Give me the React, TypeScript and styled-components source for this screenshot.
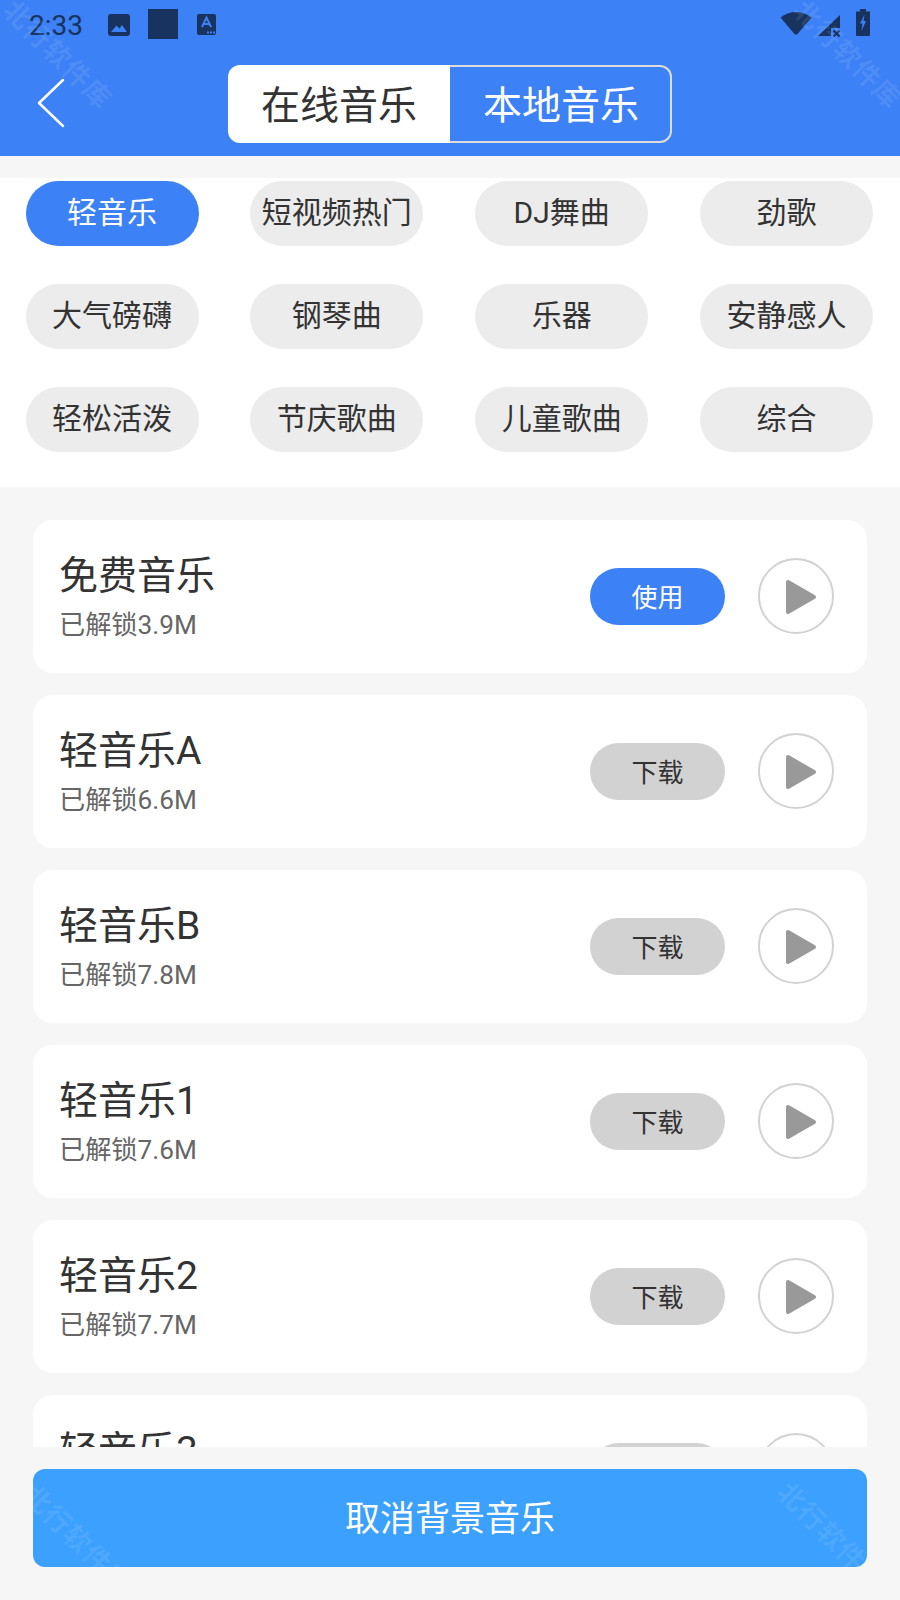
import { FunctionComponent } from "react";
import styled, { createGlobalStyle } from "styled-components";

const GlobalStyle = createGlobalStyle`
  html, body {
    margin: 0;
    padding: 0;
    background: #f6f6f6;
  }
  * {
    box-sizing: border-box;
  }
`;

const Page = styled.div`
  position: relative;
  width: 900px;
  height: 1600px;
  display: flex;
  flex-direction: column;
  overflow: hidden;
  background: #f6f6f6;
  font-family: Roboto, "Noto Sans CJK SC", sans-serif;
  color: #333;
`;
const Header = styled.header`
  height: 156px;
  flex: none;
  background: #3c81f6;
`;
const StatusBar = styled.div`
  height: 48px;
  padding: 9px 30px 0 29px;
  display: flex;
  align-items: flex-start;
  color: #18335f;
`;
const Time = styled.span`
  width: 78px;
  font-size: 28px;
  line-height: 32px;
  margin-top: 1px;
`;
const StatusLeft = styled.div`
  display: flex;
  align-items: flex-start;
`;
const StatusRight = styled.div`
  margin-left: auto;
  display: flex;
  align-items: flex-start;
`;
const NavRow = styled.div`
  position: relative;
  height: 108px;
  padding-top: 17px;
  display: flex;
  justify-content: center;
  align-items: flex-start;
`;
const BackButton = styled.button`
  position: absolute;
  left: 36px;
  top: 29px;
  width: 32px;
  height: 52px;
  padding: 0;
  border: 0;
  background: none;
`;
const Toggle = styled.div`
  display: flex;
  width: 444px;
  height: 78px;
`;
const ToggleTab = styled.div<{ $active?: boolean }>`
  flex: none;
  width: 222px;
  display: flex;
  align-items: center;
  justify-content: center;
  padding: 0 0 5px ${(p) => (p.$active ? 0 : 2)}px;
  font-size: 39px;
  background: ${(p) => (p.$active ? "#fff" : "transparent")};
  color: ${(p) => (p.$active ? "#333" : "#fff")};
  border: ${(p) => (p.$active ? "none" : "2px solid #dcdcdc")};
  border-left: none;
  border-radius: ${(p) => (p.$active ? "12px 0 0 12px" : "0 12px 12px 0")};
`;
const ChipPanel = styled.section`
  flex: none;
  margin-top: 22px;
  height: 309px;
  padding: 3px 27px 0 25.5px;
  background: #fff;
  display: grid;
  grid-template-columns: repeat(4, 173px);
  grid-auto-rows: 65px;
  justify-content: space-between;
  row-gap: 38px;
`;
const Chip = styled.div<{ $active?: boolean }>`
  display: flex;
  align-items: center;
  justify-content: center;
  padding-bottom: 7px;
  border-radius: 33px;
  font-size: 30px;
  white-space: nowrap;
  background: ${(p) => (p.$active ? "#3c81f6" : "#ececec")};
  color: ${(p) => (p.$active ? "#fff" : "#333")};
`;
const TrackList = styled.section`
  flex: none;
  height: 927px;
  margin-top: 33px;
  padding: 0 33px;
  display: flex;
  flex-direction: column;
  gap: 22px;
  overflow: hidden;
`;
const TrackCard = styled.article`
  flex: none;
  height: 153px;
  padding: 0 33px 0 26px;
  display: flex;
  align-items: center;
  background: #fff;
  border-radius: 20px;
`;
const TrackInfo = styled.div`
  flex: 1;
  display: flex;
  flex-direction: column;
`;
const TrackName = styled.div`
  font-size: 39px;
  line-height: 50px;
`;
const TrackSize = styled.div`
  margin-top: 6px;
  font-size: 26.2px;
  line-height: 36px;
  color: #666;
`;
const ActionButton = styled.div<{ $active?: boolean }>`
  width: 135px;
  height: 57px;
  display: flex;
  align-items: center;
  justify-content: center;
  padding-bottom: 2px;
  border-radius: 29px;
  font-size: 26px;
  background: ${(p) => (p.$active ? "#3c81f6" : "#d2d2d2")};
  color: ${(p) => (p.$active ? "#fff" : "#333")};
`;
const PlayButton = styled.div`
  width: 76px;
  height: 76px;
  margin: 0 0 2px 33px;
  display: flex;
  align-items: center;
  justify-content: center;
  border: 2px solid #d2d2d2;
  border-radius: 50%;
`;
const Footer = styled.footer`
  flex: none;
  padding: 22px 33px 0;
`;
const CancelButton = styled.div`
  height: 98px;
  display: flex;
  align-items: center;
  justify-content: center;
  padding-bottom: 5px;
  border-radius: 12px;
  background: #3ca0fe;
  color: #fff;
  font-size: 35px;
`;
const Watermark = styled.div<{ $x: number; $y: number }>`
  position: absolute;
  left: ${(p) => p.$x}px;
  top: ${(p) => p.$y}px;
  font-size: 27px;
  font-weight: 700;
  line-height: 28px;
  letter-spacing: 1px;
  white-space: nowrap;
  color: rgba(255, 255, 255, 0.09);
  transform: rotate(45deg);
  pointer-events: none;
`;

const ImageIcon = () => (
  <svg width="24" height="24" viewBox="0 0 24 24" style={{ margin: "4px 17px 0 0" }}>
    <rect x="1" y="1" width="22" height="22" rx="3" fill="#18335f" />
    <path d="M4 19 L9.5 12.5 L12.5 15.5 L15 12 L20 19 Z" fill="#3c81f6" />
  </svg>
);
const SquareIcon = () => (
  <svg width="30" height="30" viewBox="0 0 30 30" style={{ marginRight: 19 }}>
    <rect width="30" height="30" fill="#18335f" />
  </svg>
);
const FontIcon = () => (
  <svg width="20" height="21" viewBox="0 0 20 21" style={{ marginTop: 5 }}>
    <rect width="19" height="21" rx="2" fill="#18335f" />
    <path d="M5 13 L9.5 3.5 L14 13 M6.8 10 H12.2" fill="none" stroke="#3c81f6" strokeWidth="2" />
    <path d="M10 17.5h2v2h-2zM13 17.5h2v2h-2zM16 17.5h2v2h-2z" fill="#3c81f6" />
  </svg>
);
const WifiIcon = () => (
  <svg width="32" height="24" viewBox="0 0 32 24" style={{ margin: "2px 5px 0 0" }}>
    <path d="M0.5 6.5 C9 -1 23 -1 31.5 6.5 L17.5 23 Q16 24 14.5 23 Z" fill="#18335f" />
  </svg>
);
const SignalIcon = () => (
  <svg width="24" height="24" viewBox="0 0 24 24" style={{ margin: "5px 15px 0 0" }}>
    <path d="M1 22 L23 1 V14 H14 V22 Z" fill="#18335f" />
    <path d="M16.5 16.5 L22.5 22.5 M22.5 16.5 L16.5 22.5" stroke="#18335f" strokeWidth="2" />
  </svg>
);
const BatteryIcon = () => (
  <svg width="14" height="27" viewBox="0 0 14 27">
    <path d="M4 0 H10 V2.5 H14 V26 Q14 27 13 27 H1 Q0 27 0 26 V2.5 H4 Z" fill="#18335f" />
    <path d="M8.5 5.5 L4 14.5 H6.5 L5.5 22 L10 12 H7.5 Z" fill="#3c81f6" />
  </svg>
);
const BackIcon = () => (
  <svg width="32" height="52" viewBox="0 0 32 52">
    <path d="M27 3 L3 26 L27 49" fill="none" stroke="#fff" strokeWidth="2.5" strokeLinecap="round" strokeLinejoin="round" />
  </svg>
);
const PlayIcon = () => (
  <svg width="32" height="36" viewBox="0 0 32 36" style={{ marginLeft: 9, marginTop: 3 }}>
    <path d="M3 3 L29 18 L3 33 Z" fill="#999" stroke="#999" strokeWidth="4" strokeLinejoin="round" />
  </svg>
);

const chips = [
  "轻音乐",
  "短视频热门",
  "DJ舞曲",
  "劲歌",
  "大气磅礴",
  "钢琴曲",
  "乐器",
  "安静感人",
  "轻松活泼",
  "节庆歌曲",
  "儿童歌曲",
  "综合",
];

const tracks = [
  { name: "免费音乐", size: "已解锁3.9M", action: "使用" },
  { name: "轻音乐A", size: "已解锁6.6M", action: "下载" },
  { name: "轻音乐B", size: "已解锁7.8M", action: "下载" },
  { name: "轻音乐1", size: "已解锁7.6M", action: "下载" },
  { name: "轻音乐2", size: "已解锁7.7M", action: "下载" },
  { name: "轻音乐3", size: "已解锁7.5M", action: "下载" },
];

const marks = [
  { x: -13, y: 41 },
  { x: 777, y: 41 },
  { x: 7, y: 1526 },
  { x: 761, y: 1523 },
];

const App: FunctionComponent = () => {
  return (
    <Page>
      <GlobalStyle />
      <Header>
        <StatusBar>
          <StatusLeft>
            <Time>2:33</Time>
            <ImageIcon />
            <SquareIcon />
            <FontIcon />
          </StatusLeft>
          <StatusRight>
            <WifiIcon />
            <SignalIcon />
            <BatteryIcon />
          </StatusRight>
        </StatusBar>
        <NavRow>
          <BackButton>
            <BackIcon />
          </BackButton>
          <Toggle>
            <ToggleTab $active>在线音乐</ToggleTab>
            <ToggleTab>本地音乐</ToggleTab>
          </Toggle>
        </NavRow>
      </Header>
      <ChipPanel>
        {chips.map((chip, i) => (
          <Chip key={chip} $active={i === 0}>
            {chip}
          </Chip>
        ))}
      </ChipPanel>
      <TrackList>
        {tracks.map((track, i) => (
          <TrackCard key={track.name}>
            <TrackInfo>
              <TrackName>{track.name}</TrackName>
              <TrackSize>{track.size}</TrackSize>
            </TrackInfo>
            <ActionButton $active={i === 0}>{track.action}</ActionButton>
            <PlayButton>
              <PlayIcon />
            </PlayButton>
          </TrackCard>
        ))}
      </TrackList>
      <Footer>
        <CancelButton>取消背景音乐</CancelButton>
      </Footer>
      {marks.map((m) => (
        <Watermark key={`${m.x}-${m.y}`} $x={m.x} $y={m.y}>
          北行软件库
        </Watermark>
      ))}
    </Page>
  );
};

export default App;
